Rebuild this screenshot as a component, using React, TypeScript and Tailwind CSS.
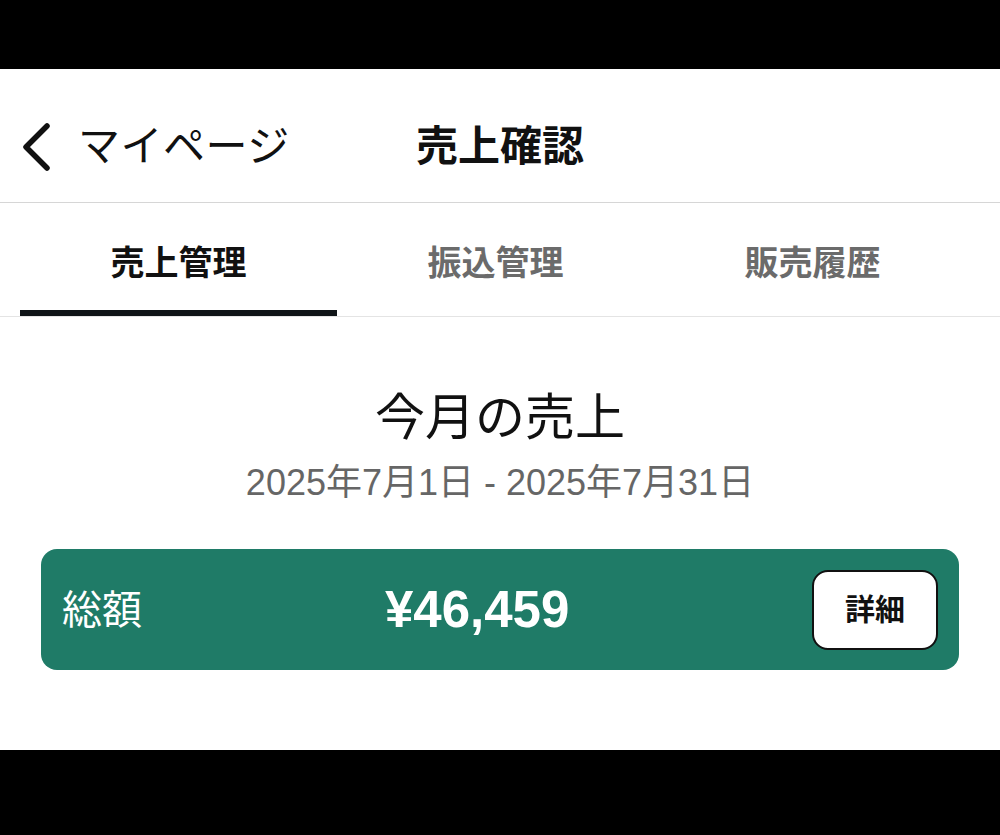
const jp = "font-['Liberation_Sans','Noto_Sans_CJK_JP',sans-serif]";

const tabs = [
  { label: '売上管理', active: true },
  { label: '振込管理', active: false },
  { label: '販売履歴', active: false },
];

const BackChevron = () => (
  <svg width="32" height="50" viewBox="0 0 32 50" fill="none" className="shrink-0">
    <polyline points="27,4 6,25 27,46" stroke="#111" strokeWidth="5.5" strokeLinecap="round" strokeLinejoin="round" />
  </svg>
);

export default function App() {
  return (
    <div className={`w-[1000px] h-[835px] flex flex-col bg-black ${jp}`}>
      <div className="h-[69px] shrink-0 bg-black" />

      <div className="flex-1 flex flex-col bg-white">
        {/* header */}
        <div className="h-[134px] shrink-0 grid grid-cols-3 items-center pt-[22px] border-b border-[#d6d6d6]">
          <div className="flex items-center gap-[26px] pl-[20px]">
            <BackChevron />
            <span className="text-[42px] text-[#111] leading-none tracking-[0.5px]">マイページ</span>
          </div>
          <div className="text-center text-[42px] font-bold text-[#111] leading-none">売上確認</div>
          <div />
        </div>

        {/* tabs */}
        <div className="h-[114px] shrink-0 grid grid-cols-3 pl-[20px] pr-[29px] border-b border-[#e4e4e4]">
          {tabs.map((t) => (
            <div key={t.label} className="relative flex items-center justify-center">
              <span className={`text-[34px] font-bold leading-none pt-[6px] ${t.active ? 'text-[#111]' : 'text-[#6b6b6b]'}`}>
                {t.label}
              </span>
              {t.active && <div className="absolute left-0 right-0 bottom-0 h-[6px] bg-[#0f1417]" />}
            </div>
          ))}
        </div>

        {/* summary */}
        <div className="flex flex-col items-center pt-[72px]">
          <div className="text-[50px] text-[#111] leading-[58px]">今月の売上</div>
          <div className="mt-[14px] text-[36px] text-[#666] leading-[44px]">2025年7月1日 - 2025年7月31日</div>
        </div>

        <div className="mx-[41px] mt-[44px] h-[121px] rounded-[16px] bg-[#1f7b67] flex items-center pl-[21px] pr-[21px]">
          <span className="w-[323px] text-[40px] text-white leading-none">総額</span>
          <span className="text-[51px] font-bold text-white leading-none">¥46,459</span>
          <button className="ml-auto w-[126px] h-[80px] rounded-[16px] bg-white border-2 border-[#111] text-[30px] font-bold text-[#111] flex items-center justify-center">
            詳細
          </button>
        </div>
        <div className="flex-1" />
      </div>

      <div className="h-[85px] shrink-0 bg-black" />
    </div>
  );
}
